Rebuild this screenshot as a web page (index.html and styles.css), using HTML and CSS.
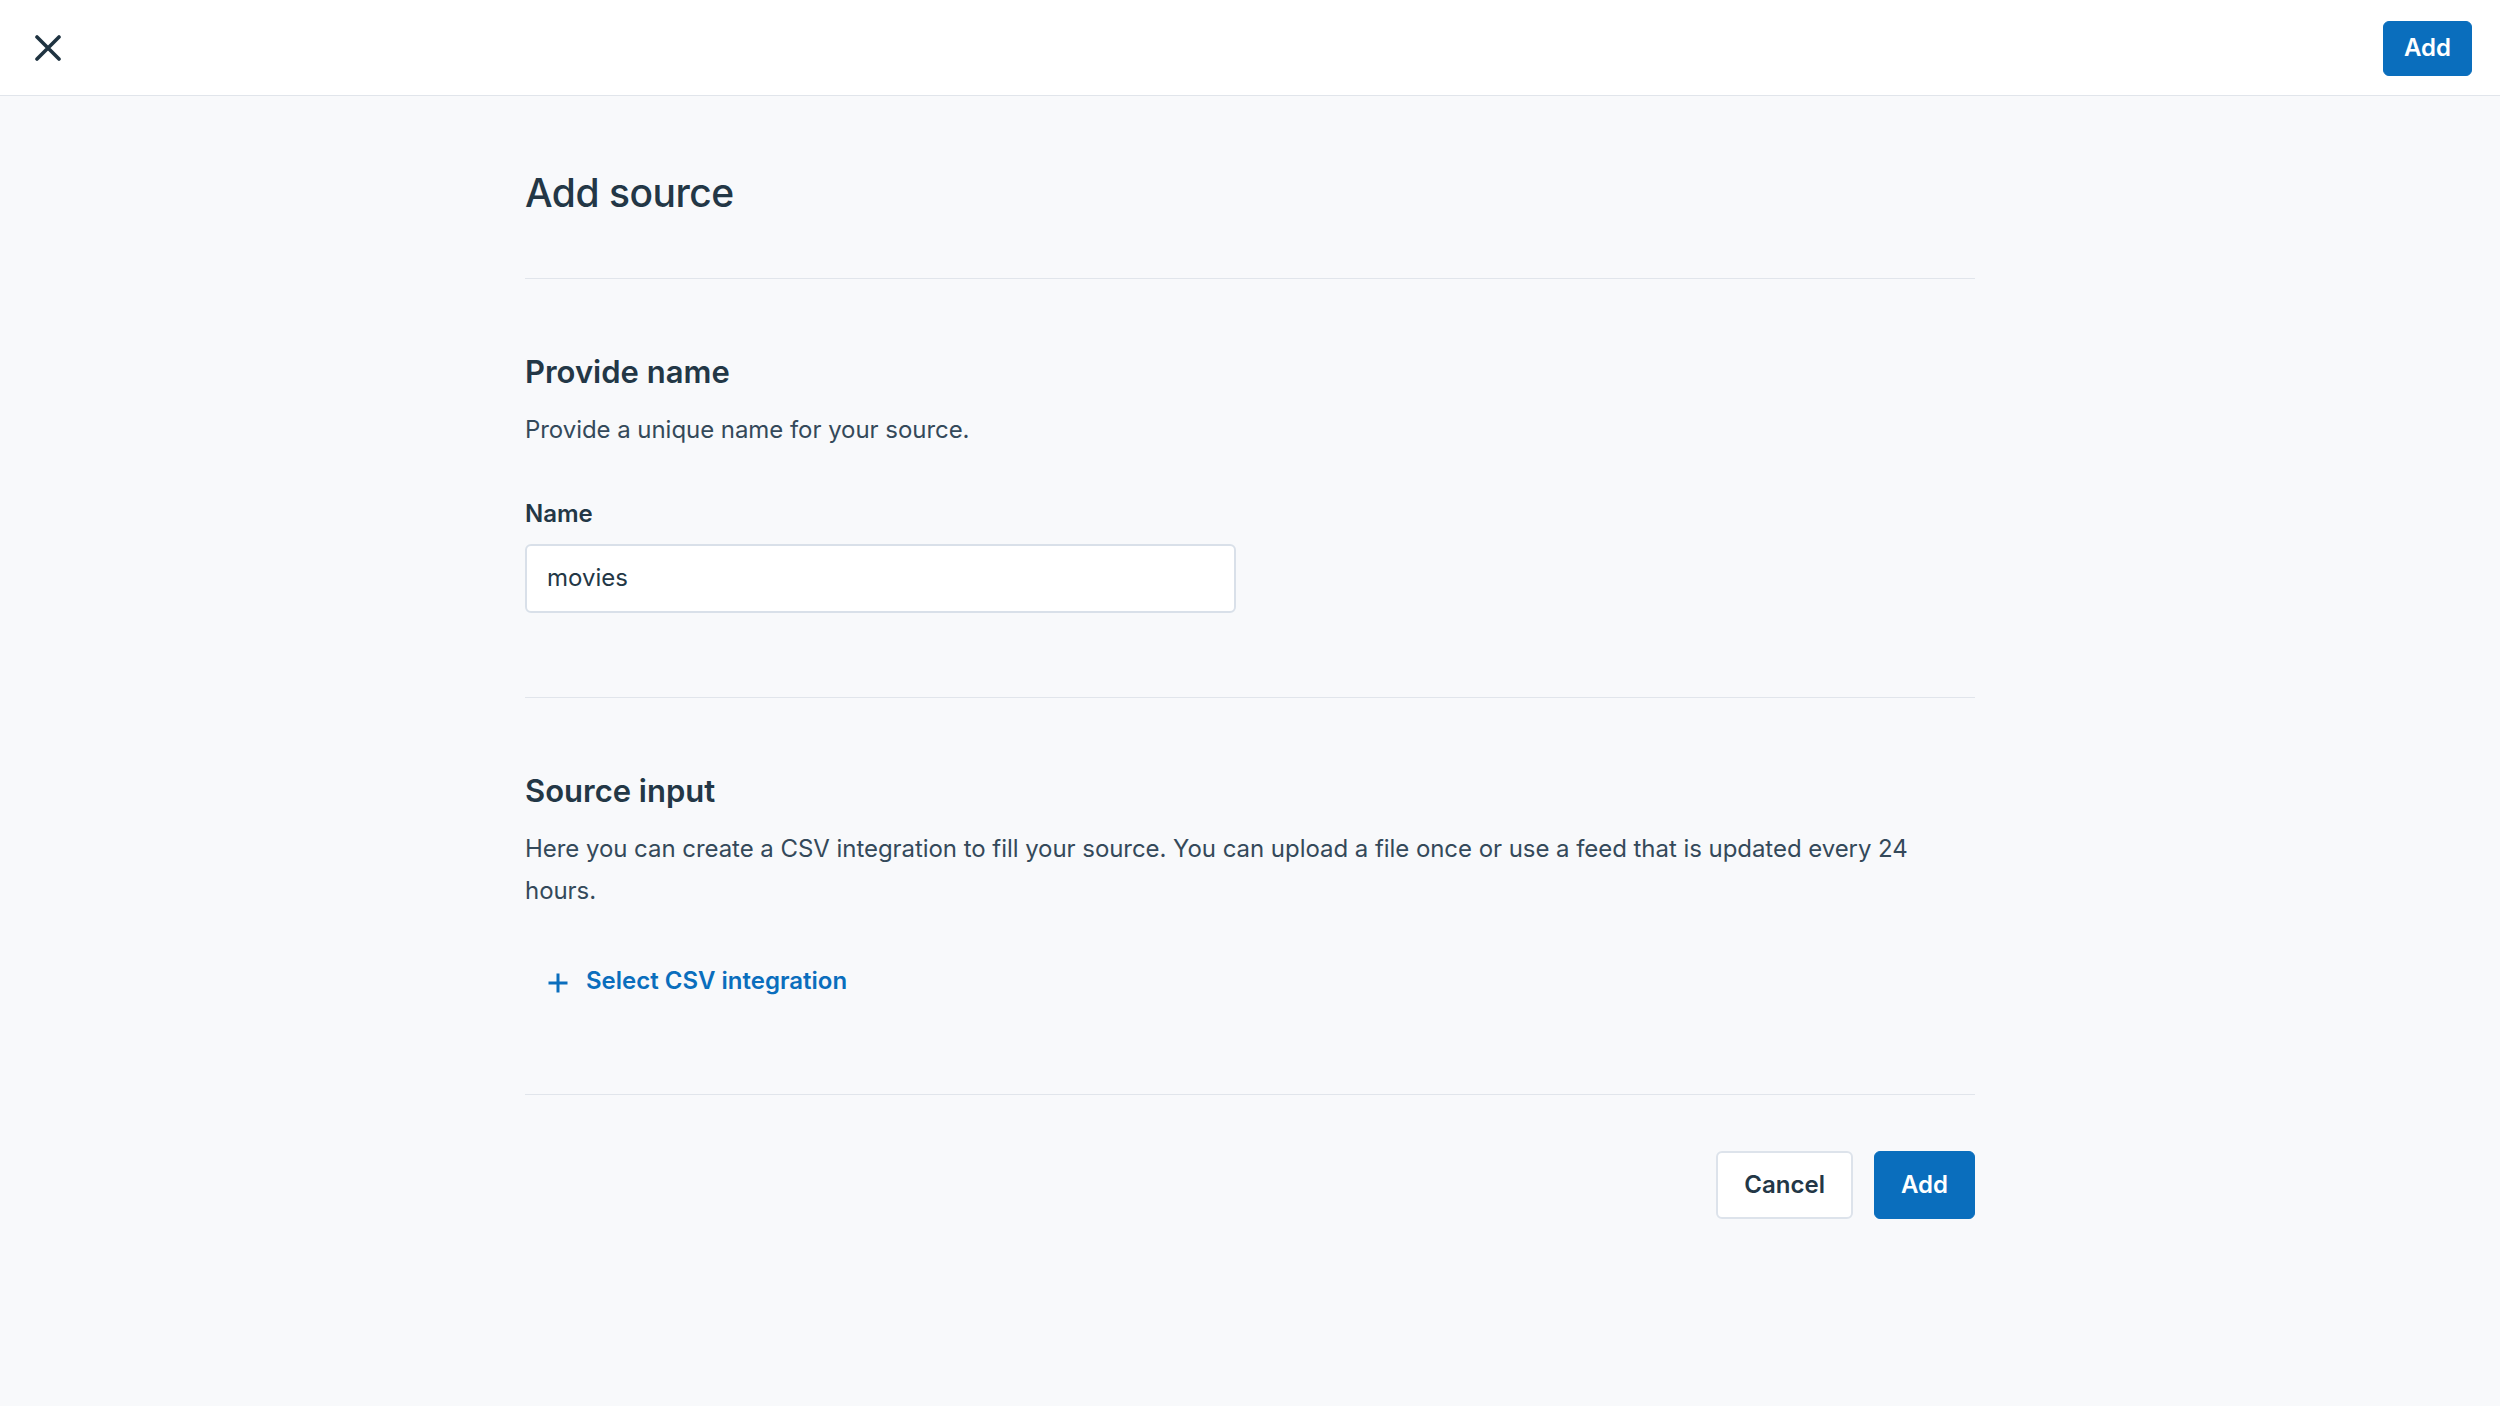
FILE: index.html
```html
<!DOCTYPE html>
<html lang="en">
<head>
<meta charset="utf-8">
<title>Add source</title>
<link rel="stylesheet" href="styles.css">
</head>
<body>
<header class="topbar">
  <button class="icon-btn" aria-label="Close">
    <svg width="26" height="26" viewBox="0 0 26 26"><path d="M2 2 L24 24 M24 2 L2 24" stroke="#1f3341" stroke-width="3.6" stroke-linecap="round" fill="none"/></svg>
  </button>
  <button class="btn btn-primary btn-small">Add</button>
</header>
<main class="page">
  <h1 class="title">Add source</h1>
  <section class="section">
    <h2 class="section-title">Provide name</h2>
    <p class="section-text">Provide a unique name for your source.</p>
    <label class="field-label" for="name">Name</label>
    <input class="field-input" id="name" type="text" value="movies">
  </section>
  <section class="section section-input">
    <h2 class="section-title">Source input</h2>
    <p class="section-text">Here you can create a CSV integration to fill your source. You can upload a file once or use a feed that is updated every 24 hours.</p>
    <button class="link-btn">
      <svg width="20" height="20" viewBox="0 0 20 20"><path d="M10 0.5 V19.5 M0.5 10 H19.5" stroke="#0a6ebd" stroke-width="3" fill="none"/></svg>
      <span>Select CSV integration</span>
    </button>
  </section>
  <div class="actions">
    <button class="btn btn-secondary">Cancel</button>
    <button class="btn btn-primary">Add</button>
  </div>
</main>
</body>
</html>
```
FILE: styles.css
```css
* { box-sizing: border-box; }
html, body {
  margin: 0;
  padding: 0;
  background: #f8f9fb;
  font-family: Inter, "Noto Sans", sans-serif;
  color: #233746;
}
.topbar {
  height: 96px;
  background: #ffffff;
  border-bottom: 1px solid #e1e5eb;
  display: flex;
  align-items: center;
  justify-content: space-between;
  padding: 0 28px 0 35px;
}
.icon-btn {
  border: 0;
  background: none;
  padding: 0;
  width: 26px;
  height: 26px;
  display: flex;
  margin-top: 1px;
  cursor: pointer;
}
.btn {
  font-family: Inter, "Noto Sans", sans-serif;
  font-size: 24px;
  font-weight: 600;
  border-radius: 6px;
  height: 68px;
  padding: 0 26px;
  line-height: 1;
  cursor: pointer;
}
.btn-primary {
  background: #0a6ebd;
  color: #ffffff;
  border: 1px solid #0a6ebd;
}
.btn-secondary {
  background: #ffffff;
  color: #233746;
  border: 2px solid #dde3eb;
}
.btn-small {
  height: 55px;
  padding: 0 20px;
  margin-top: 1px;
}
.page {
  width: 1450px;
  margin: 0 auto;
  padding-top: 73px;
}
.title {
  margin: 0;
  font-size: 39px;
  line-height: 48px;
  font-weight: 500;
  letter-spacing: -0.5px;
  padding-bottom: 61px;
  border-bottom: 1px solid #e1e5eb;
}
.section {
  padding-top: 75px;
  padding-bottom: 84px;
  border-bottom: 1px solid #e1e5eb;
  display: flex;
  flex-direction: column;
  align-items: flex-start;
}
.section-input {
  padding-bottom: 0;
}
.section-title {
  margin: 0 0 19px;
  font-size: 31px;
  line-height: 36px;
  font-weight: 600;
  letter-spacing: 0;
}
.section-text {
  margin: 0;
  font-size: 24px;
  line-height: 42px;
  color: #34495a;
  letter-spacing: -0.05px;
}
.field-label {
  margin-top: 47px;
  font-size: 24px;
  line-height: 32px;
  font-weight: 600;
}
.field-input {
  margin-top: 14px;
  width: 711px;
  height: 69px;
  border: 2px solid #d9e0e9;
  border-radius: 6px;
  background: #ffffff;
  padding: 0 20px 2px;
  font-family: Inter, "Noto Sans", sans-serif;
  font-size: 24px;
  color: #233746;
  outline: none;
}
.link-btn {
  margin: 45px 0 89px;
  border: 0;
  background: none;
  padding: 8px 0 8px 23px;
  display: flex;
  align-items: center;
  gap: 18px;
  font-family: Inter, "Noto Sans", sans-serif;
  font-size: 24px;
  line-height: 32px;
  font-weight: 600;
  color: #0a6ebd;
  cursor: pointer;
}
.link-btn svg { margin-top: 4px; }
.actions {
  display: flex;
  justify-content: flex-end;
  gap: 21px;
  padding-top: 56px;
}
```
